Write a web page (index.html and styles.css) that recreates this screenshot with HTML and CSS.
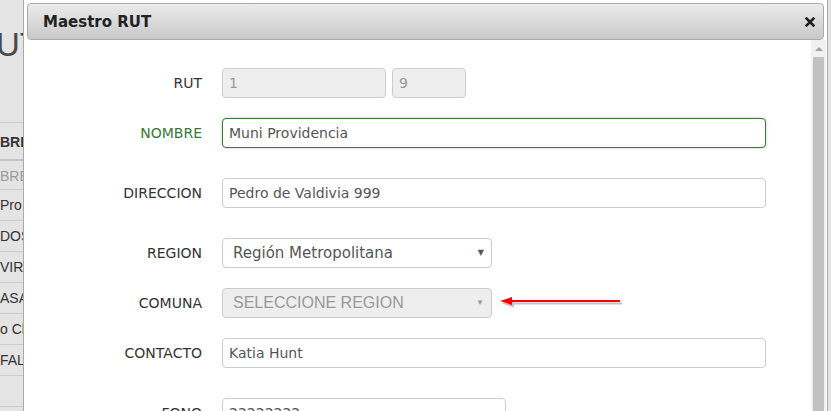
FILE: index.html
```html
<!DOCTYPE html>
<html lang="es">
<head>
<meta charset="utf-8" />
<link rel="stylesheet" href="styles.css">
</head>
<body>
  <div class="page">
    <h1 class="page-title">UT</h1>
    <div class="grid">
      <div class="cell head">BRE</div>
      <div class="cell filter">BRE</div>
      <div class="cell">Pro</div>
      <div class="cell">DOS</div>
      <div class="cell">VIRE</div>
      <div class="cell">ASA</div>
      <div class="cell">o Ch</div>
      <div class="cell">FAL</div>
      <div class="cell"></div>
    </div>
  </div>

  <div class="dialog">
    <div class="titlebar">
      <span class="title">Maestro RUT</span>
      <svg class="close" width="10" height="10" viewBox="0 0 10 10">
        <path d="M1.5 1.5 L8.5 8.5 M8.5 1.5 L1.5 8.5" stroke="#222" stroke-width="2.6" stroke-linecap="square"/>
      </svg>
    </div>
    <div class="dialog-body">
      <form class="form">
        <div class="row gap-s">
          <label class="lbl">RUT</label>
          <div class="ctrl">
            <input class="field rut" type="text" value="1" disabled>
            <input class="field dv" type="text" value="9" disabled>
          </div>
        </div>
        <div class="row gap-l ok">
          <label class="lbl">NOMBRE</label>
          <div class="ctrl"><input class="field wide" type="text" value="Muni Providencia"></div>
        </div>
        <div class="row gap-l">
          <label class="lbl">DIRECCION</label>
          <div class="ctrl"><input class="field wide" type="text" value="Pedro de Valdivia 999"></div>
        </div>
        <div class="row gap-s">
          <label class="lbl">REGION</label>
          <div class="ctrl">
            <div class="select">Región Metropolitana<span class="caret">▼</span></div>
          </div>
        </div>
        <div class="row gap-s">
          <label class="lbl">COMUNA</label>
          <div class="ctrl">
            <div class="select off">SELECCIONE REGION<span class="caret">▼</span></div>
          </div>
        </div>
        <div class="row gap-l">
          <label class="lbl">CONTACTO</label>
          <div class="ctrl"><input class="field wide" type="text" value="Katia Hunt"></div>
        </div>
        <div class="row">
          <label class="lbl">FONO</label>
          <div class="ctrl"><input class="field fono" type="text" value="22222222"></div>
        </div>
      </form>
      <div class="scrollbar">
        <div class="sb-up"></div>
        <div class="sb-thumb"></div>
      </div>
    </div>
    <svg class="arrow" width="130" height="16" viewBox="0 0 130 16">
      <g transform="translate(2,2.5)" opacity="0.35" fill="#555" stroke="#555">
        <line x1="10" y1="5" x2="120" y2="5" stroke-width="2"/>
        <path d="M0 5 L12 1 L12 9 Z" stroke="none"/>
      </g>
      <line x1="10" y1="5" x2="120" y2="5" stroke="#f00" stroke-width="2"/>
      <path d="M0 5 L12 1 L12 9 Z" fill="#f00"/>
    </svg>
  </div>
</body>
</html>
```

FILE: styles.css
```css
*{
  margin:0;
  padding:0;
  box-sizing:border-box;
}
body{
  width:831px;
  height:411px;
  overflow:hidden;
  background:#e4e4e4;
  font-family:"Liberation Sans", Arial, sans-serif;
  position:relative;
}
.page{
  width:23px;
  overflow:hidden;
}
.page-title{
  font-size:33px;
  font-weight:normal;
  color:#4a4a4a;
  margin:27px 0 0 -4px;
  height:95px;
  line-height:36px;
  white-space:nowrap;
}
.grid{
  border-top:1px solid #cdcdcd;
}
.cell{
  height:31px;
  line-height:30px;
  font-size:14px;
  color:#333;
  border-bottom:1px solid #cdcdcd;
  white-space:nowrap;
}
.cell.head{
  font-weight:bold;
  height:38px;
  line-height:38px;
  border-bottom:2px solid #c4c4c4;
}
.cell.filter{
  color:#9a9a9a;
  height:29px;
}

/* dialog */
.dialog{
  position:absolute;
  left:23px;
  top:-1px;
  width:805px;
  height:420px;
  background:#fff;
  border:1px solid #a9a9a9;
  font-family:"DejaVu Sans", Verdana, sans-serif;
}
.titlebar{
  margin:3px 3px 0 3px;
  height:37px;
  border:1px solid #aaa;
  border-radius:4px;
  background:linear-gradient(#ebebeb, #c9c9c9);
  display:flex;
  align-items:center;
  justify-content:space-between;
  padding:0 8px 0 15px;
}
.title{
  font-size:15px;
  font-weight:bold;
  color:#222;
}
.close{
  margin-top:1px;
}
.dialog-body{
  display:flex;
  height:380px;
}
.form{
  flex:1;
  padding-top:28px;
}
.row{
  display:flex;
  align-items:center;
  height:30px;
  margin-bottom:20px;
}
.row.gap-l{
  margin-bottom:30px;
}
.row.gap-s{
  margin-bottom:20px;
}
.lbl{
  width:178px;
  text-align:right;
  font-size:14px;
  color:#333;
}
.ctrl{
  margin-left:20px;
  display:flex;
  gap:6px;
}
.field{
  height:30px;
  border:1px solid #ccc;
  border-radius:4px;
  padding:0 6px;
  font-family:"DejaVu Sans", Verdana, sans-serif;
  font-size:14px;
  color:#555;
  background:#fff;
}
.field:disabled{
  background:#eee;
  color:#999;
}
.rut{ width:164px; }
.dv{ width:74px; }
.wide{ width:544px; }
.fono{ width:284px; }
.ok .lbl{
  color:#3c763d;
}
.ok .field{
  border-color:#3c763d;
  box-shadow:0 0 3px rgba(60,118,61,0.35);
}
.select{
  width:270px;
  height:30px;
  border:1px solid #ccc;
  border-radius:4px;
  padding:0 10px;
  font-size:15px;
  line-height:28px;
  color:#555;
  display:flex;
  justify-content:space-between;
  align-items:center;
}
.select.off{
  background:#eee;
  color:#999;
  font-family:"Liberation Sans", Arial, sans-serif;
  font-size:16px;
}
.caret{
  font-size:8px;
  color:#555;
  margin-right:-3px;
}
.off .caret{
  color:#999;
}
.scrollbar{
  width:15px;
  background:#f1f1f1;
  margin-right:1px;
  display:flex;
  flex-direction:column;
  align-items:center;
}
.sb-up{
  width:0;
  height:0;
  margin-top:7px;
  border-left:4px solid transparent;
  border-right:4px solid transparent;
  border-bottom:4px solid #a3a3a3;
}
.sb-thumb{
  width:11px;
  flex:1;
  margin-top:6px;
  background:#c1c1c1;
}
.arrow{
  position:absolute;
  left:476px;
  top:296px;
}
```
